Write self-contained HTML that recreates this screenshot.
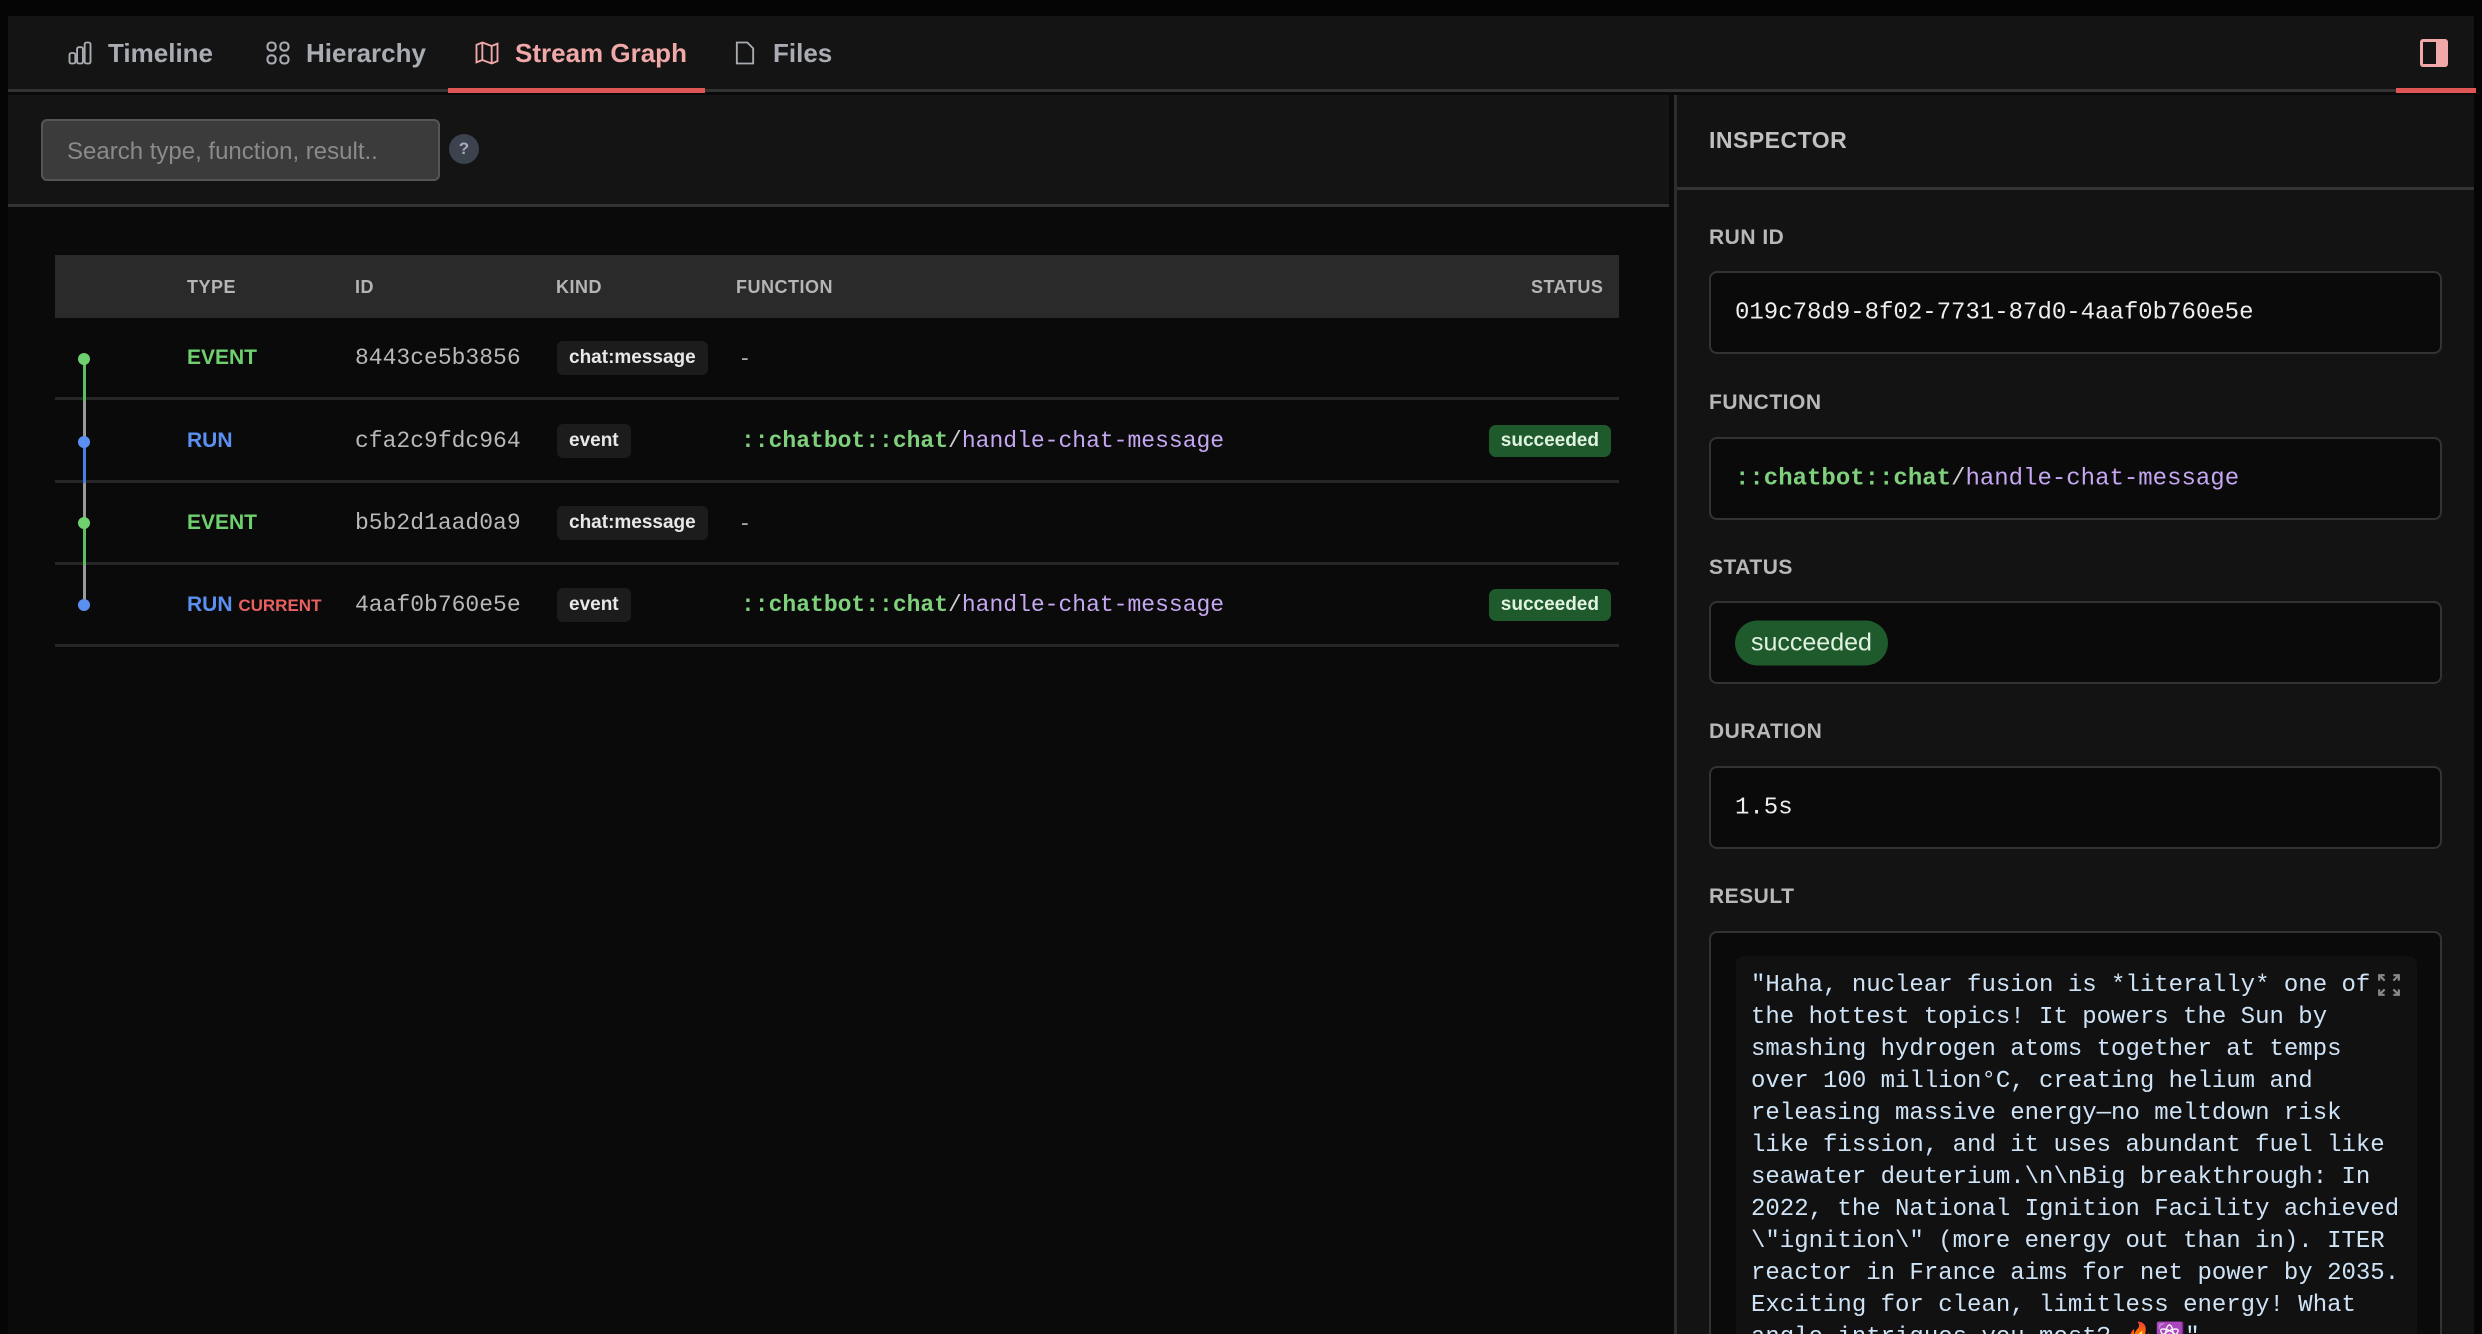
<!DOCTYPE html>
<html style="width:2482px;height:1334px;overflow:hidden"><head><meta charset="utf-8"><style>
*{box-sizing:border-box;margin:0;padding:0}
body{width:2482px;height:1334px;background:#0a0a0a;overflow:hidden;position:relative;font-family:"Liberation Sans","DejaVu Sans",sans-serif;color:#ddd}
.abs{position:absolute}
.mono{font-family:"Liberation Mono","DejaVu Sans Mono",monospace}
.tab{position:absolute;top:36px;font-size:26px;font-weight:bold;color:#a9acb3;display:flex;align-items:center;gap:14px;height:34px}
.tab svg{width:28px;height:28px}
.hdr{position:absolute;top:277px;font-size:18px;font-weight:bold;color:#b5b5b5;letter-spacing:0.5px}
.row{position:absolute;left:55px;width:1564px;height:82px;border-bottom:3px solid #262626}
.cell{position:absolute;top:50%;transform:translateY(-50%);white-space:nowrap}
.type{left:132px;font-size:21px;font-weight:bold}
.id{left:300px;font-size:23px;color:#b8b8b8}
.kind{left:502px;background:#1c1c1c;color:#e8e8e8;font-size:19px;font-weight:bold;padding:6px 12px;border-radius:6px}
.fn{left:686px;font-size:23px}
.g{color:#7fd07c;font-weight:bold}
.p{color:#c5a7f2}
.badge{right:8px;background:#1f5a2c;color:#e0f2e0;font-size:19px;font-weight:bold;padding:5px 12px;border-radius:7px}
.lbl{position:absolute;left:1709px;font-size:21px;font-weight:bold;color:#b8b8b8;letter-spacing:0.5px}
.box{position:absolute;left:1709px;width:733px;height:83px;border:2px solid #333;border-radius:8px;background:#0a0a0a}
.box .v{position:absolute;left:24px;top:50%;transform:translateY(-50%);font-size:24px;white-space:nowrap}
</style></head><body>
<div class="abs" style="left:0;top:0;width:2482px;height:16px;background:#050505"></div>
<div class="abs" style="left:0;top:16px;width:2474px;height:76px;background:#141414;border-bottom:3px solid #333"></div>
<div class="abs" style="left:2474px;top:0;width:8px;height:1334px;background:#050505"></div>
<div class="abs" style="left:0;top:16px;width:8px;height:1318px;background:#050505"></div>

<div class="tab" style="left:66px"><svg viewBox="0 0 24 24" fill="none" stroke="#a9acb3" stroke-width="1.6"><rect x="3" y="12" width="5" height="9" rx="1.5"/><rect x="9.5" y="7" width="5" height="14" rx="1.5"/><rect x="16" y="3" width="5" height="18" rx="1.5"/></svg><span>Timeline</span></div>
<div class="tab" style="left:264px"><svg viewBox="0 0 24 24" fill="none" stroke="#a9acb3" stroke-width="1.8"><rect x="3" y="3" width="7" height="7" rx="3"/><rect x="14" y="3" width="7" height="7" rx="3"/><rect x="3" y="14" width="7" height="7" rx="3"/><rect x="14" y="14" width="7" height="7" rx="3"/></svg><span>Hierarchy</span></div>
<div class="tab" style="left:473px;color:#f0a8a8"><svg viewBox="0 0 24 24" fill="none" stroke="#f0a8a8" stroke-width="1.6"><path d="M3 5l5-2 8 3 5-2v15l-5 2-8-3-5 2z M8 3v15 M16 6v15"/></svg><span>Stream Graph</span></div>
<div class="abs" style="left:448px;top:88px;width:257px;height:5px;background:#e05555"></div>
<div class="tab" style="left:731px"><svg viewBox="0 0 24 24" fill="none" stroke="#a9acb3" stroke-width="1.6"><path d="M5 3h9l5 5v13H5z"/></svg><span>Files</span></div>
<svg class="abs" style="left:2418px;top:37px" width="32" height="32" viewBox="0 0 32 32"><rect x="2" y="2" width="28" height="28" rx="3" fill="#f0a8a8"/><rect x="5" y="5" width="13" height="22" fill="#141414"/></svg>
<div class="abs" style="left:2396px;top:88px;width:80px;height:5px;background:#e05555"></div>

<div class="abs" style="left:8px;top:95px;width:1661px;height:112px;background:#141414;border-bottom:3px solid #333"></div>
<div class="abs" style="left:41px;top:119px;width:399px;height:62px;background:#3b3b3b;border:2px solid #555;border-radius:6px;font-size:24px;color:#8a8a8a;padding:17px 0 0 24px">Search type, function, result..</div>
<div class="abs" style="left:449px;top:134px;width:30px;height:30px;border-radius:50%;background:#3c434e;color:#aab;font-size:17px;font-weight:bold;text-align:center;line-height:30px">?</div>

<div class="abs" style="left:55px;top:255px;width:1564px;height:63px;background:#2a2a2a"></div>
<div class="hdr" style="left:187px">TYPE</div>
<div class="hdr" style="left:355px">ID</div>
<div class="hdr" style="left:556px">KIND</div>
<div class="hdr" style="left:736px">FUNCTION</div>
<div class="hdr" style="left:1531px">STATUS</div>

<div class="row" style="top:318px">
<div class="cell type" style="color:#6fd06f">EVENT</div><div class="cell id mono">8443ce5b3856</div><div class="cell kind">chat:message</div><div class="cell fn" style="color:#aaa">-</div></div>
<div class="row" style="top:401px">
<div class="cell type" style="color:#5b8ff0">RUN</div><div class="cell id mono">cfa2c9fdc964</div><div class="cell kind">event</div><div class="cell fn mono"><span class="g">::chatbot::chat</span><span style="color:#ccc">/</span><span class="p">handle-chat-message</span></div><div class="cell badge">succeeded</div></div>
<div class="row" style="top:483px">
<div class="cell type" style="color:#6fd06f">EVENT</div><div class="cell id mono">b5b2d1aad0a9</div><div class="cell kind">chat:message</div><div class="cell fn" style="color:#aaa">-</div></div>
<div class="row" style="top:565px">
<div class="cell type" style="color:#5b8ff0">RUN <span style="color:#e86060;font-size:17px">CURRENT</span></div><div class="cell id mono">4aaf0b760e5e</div><div class="cell kind">event</div><div class="cell fn mono"><span class="g">::chatbot::chat</span><span style="color:#ccc">/</span><span class="p">handle-chat-message</span></div><div class="cell badge">succeeded</div></div>

<!-- timeline segments -->
<div class="abs" style="left:83px;top:359px;width:3px;height:42px;background:#5fbf5f"></div>
<div class="abs" style="left:83px;top:401px;width:3px;height:41px;background:#9a9a9a"></div>
<div class="abs" style="left:83px;top:442px;width:3px;height:41px;background:#4a7ee0"></div>
<div class="abs" style="left:83px;top:483px;width:3px;height:40px;background:#9a9a9a"></div>
<div class="abs" style="left:83px;top:523px;width:3px;height:42px;background:#5fbf5f"></div>
<div class="abs" style="left:83px;top:565px;width:3px;height:40px;background:#9a9a9a"></div>

<div class="abs" style="left:78px;top:353px;width:12px;height:12px;border-radius:50%;background:#6fd06f"></div>
<div class="abs" style="left:78px;top:436px;width:12px;height:12px;border-radius:50%;background:#5b8ff0"></div>
<div class="abs" style="left:78px;top:517px;width:12px;height:12px;border-radius:50%;background:#6fd06f"></div>
<div class="abs" style="left:78px;top:599px;width:12px;height:12px;border-radius:50%;background:#5b8ff0"></div>

<div class="abs" style="left:1674px;top:95px;width:800px;height:1239px;background:#131313;border-left:3px solid #2e2e2e"></div>
<div class="abs" style="left:1677px;top:187px;width:797px;height:3px;background:#333"></div>
<div class="lbl" style="top:127px;font-size:23px;color:#c0c0c0">INSPECTOR</div>
<div class="lbl" style="top:226px">RUN ID</div>
<div class="box" style="top:271px"><div class="v mono" style="color:#eee">019c78d9-8f02-7731-87d0-4aaf0b760e5e</div></div>
<div class="lbl" style="top:391px">FUNCTION</div>
<div class="box" style="top:437px"><div class="v mono"><span class="g">::chatbot::chat</span><span style="color:#ccc">/</span><span class="p">handle-chat-message</span></div></div>
<div class="lbl" style="top:556px">STATUS</div>
<div class="box" style="top:601px"><div class="v" style="left:24px;background:#1f5a2c;color:#e0f2e0;border-radius:24px;padding:8px 16px;font-size:25px">succeeded</div></div>
<div class="lbl" style="top:720px">DURATION</div>
<div class="box" style="top:766px"><div class="v mono" style="color:#eee">1.5s</div></div>
<div class="lbl" style="top:885px">RESULT</div>
<div class="abs" style="left:1709px;top:931px;width:733px;height:403px;border:2px solid #333;border-bottom:none;border-radius:8px 8px 0 0;background:#0a0a0a;overflow:hidden">
<div class="abs" style="left:25px;top:23px;width:681px;height:400px;background:#111;border-radius:8px"></div>
<div class="abs mono" style="left:40px;top:37px;width:640px;font-size:24px;line-height:32px;color:#cfe3f7;white-space:pre">"Haha, nuclear fusion is *literally* one of
the hottest topics! It powers the Sun by
smashing hydrogen atoms together at temps
over 100 million°C, creating helium and
releasing massive energy—no meltdown risk
like fission, and it uses abundant fuel like
seawater deuterium.\n\nBig breakthrough: In
2022, the National Ignition Facility achieved
\"ignition\" (more energy out than in). ITER
reactor in France aims for net power by 2035.
Exciting for clean, limitless energy! What
angle intrigues you most? 🔥⚛️"</div>
<svg class="abs" style="left:666px;top:40px" width="24" height="24" viewBox="0 0 22 22" stroke="#888" stroke-width="2" fill="none"><path d="M2 7V2h5M2 2l5 5M15 2h5v5M20 2l-5 5M2 15v5h5M2 20l5-5M20 15v5h-5M20 20l-5-5"/></svg>
</div>
</body></html>
